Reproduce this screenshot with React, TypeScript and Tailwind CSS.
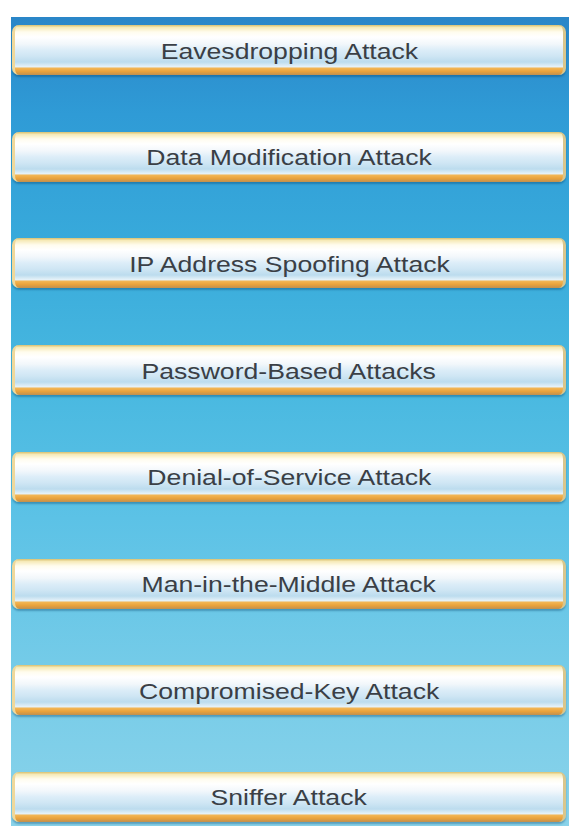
import React from "react";

const items = [
  "Eavesdropping Attack",
  "Data Modification Attack",
  "IP Address Spoofing Attack",
  "Password-Based Attacks",
  "Denial-of-Service Attack",
  "Man-in-the-Middle Attack",
  "Compromised-Key Attack",
  "Sniffer Attack",
];

export default function App() {
  return (
    <div className="w-[582px] h-[834px] bg-white pt-[17px] pl-[11px]" style={{ fontFamily: '"Liberation Sans", Arial, sans-serif' }}>
      <div className="w-[558px] h-[809px] flex flex-col justify-between pt-[8px] pb-[4px] pl-[1px] pr-[3px] bg-[linear-gradient(180deg,#2a86c8_0%,#2f9bd6_12%,#38aadb_28%,#48b8e0_45%,#5cc2e6_62%,#74cbe8_80%,#8ad3ea_100%)]">
        {items.map((t) => (
          <div
            key={t}
            className="h-[50px] rounded-[7px] border-l-[3px] border-r-[3px] border-l-[#efd89a] border-r-[#d9c68c] shadow-[0_2px_2px_rgba(0,60,100,0.35)] flex items-center justify-center bg-[linear-gradient(180deg,#d8c070_0%,#f6eab8_5%,#fffcee_14%,#ffffff_24%,#f2f7fb_38%,#dcedf8_50%,#cfe6f4_62%,#bcdcee_74%,#e4f1f8_83%,#f2b452_87%,#e9a23c_93%,#c09050_100%)]"
          >
            <span className="inline-block text-[22px] leading-none text-[#3a3f46] scale-x-[1.21] mt-[3px]">{t}</span>
          </div>
        ))}
      </div>
    </div>
  );
}
